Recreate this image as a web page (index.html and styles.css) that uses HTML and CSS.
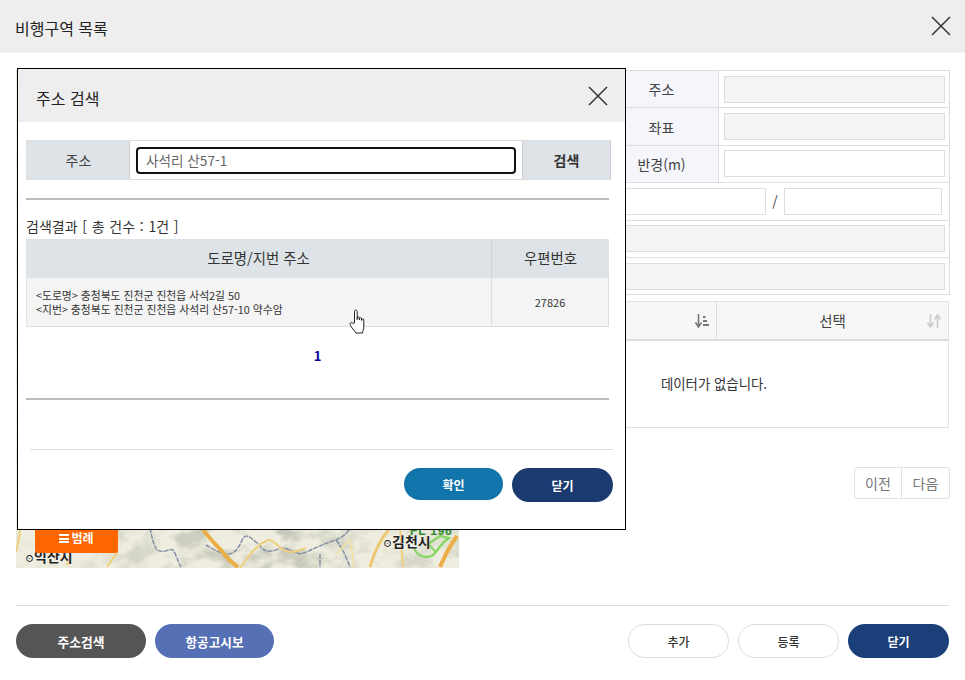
FILE: index.html
```html
<!DOCTYPE html>
<html lang="ko">
<head>
<meta charset="utf-8">
<title>비행구역 목록</title>
<link rel="stylesheet" href="styles.css">
</head>
<body>
<div class="page">
  <header class="head">
    <h1 class="head-title">비행구역 목록</h1>
    <svg class="x-icon" viewBox="0 0 20 20"><path d="M1 1L19 19M19 1L1 19"/></svg>
  </header>

  <main class="main">
    <div class="map">
      <svg class="map-svg" viewBox="0 0 443 498" preserveAspectRatio="none">
        <defs>
          <filter id="terrain" x="0" y="0" width="100%" height="100%">
            <feTurbulence type="fractalNoise" baseFrequency="0.035 0.05" numOctaves="5" seed="11"/>
            <feColorMatrix type="matrix" values="0 0 0 0 0.56  0 0 0 0 0.57  0 0 0 0 0.48  2.6 2.6 0 0 -2.35"/>
          </filter>
          <linearGradient id="hills" x1="0" x2="1" y1="0" y2="0">
            <stop offset="0" stop-color="#333"/>
            <stop offset="0.2" stop-color="#666"/>
            <stop offset="0.32" stop-color="#bbb"/>
            <stop offset="0.62" stop-color="#fff"/>
            <stop offset="0.85" stop-color="#888"/>
            <stop offset="1" stop-color="#999"/>
          </linearGradient>
          <mask id="hill-mask"><rect width="443" height="498" fill="url(#hills)"/></mask>
        </defs>
        <rect width="443" height="498" fill="#eeeddf"/>
        <g mask="url(#hill-mask)"><rect width="443" height="498" filter="url(#terrain)"/></g>
        <path d="M134 458C136 468 138 476 141 480C150 484 152 478 157 480C160 484 162 492 165 497" class="river"/>
        <path d="M190 475C196 478 204 484 212 484C218 484 222 480 227 468C232 462 238 472 243 474C248 484 256 482 264 478C272 478 278 482 284 484C292 482 298 478 304 476C316 470 328 470 334 458" class="river"/>
        <path d="M304 484V497M320 470C326 478 328 482 334 497" class="river"/>
        <path d="M186 458C194 470 204 478 208 484C214 492 218 494 222 497" class="road-o"/>
        <path d="M4 458C4 468 2 472 0 482M91 497C96 490 98 486 102 482M50 495L54 491" class="road-y"/>
        <path d="M224 498C232 488 238 476 252 470C258 468 264 482 274 482C280 482 284 480 290 478" class="road-y"/>
        <path d="M321 484C326 476 330 474 334 470C336 480 337 490 338 497" class="road-lt"/>
        <path d="M354 497C358 484 362 472 374 458" class="road-w"/>
        <path d="M387 497C386 484 385 470 384 458" class="road-y"/>
        <path d="M424 497C428 488 432 478 441 466" class="road-o"/>
        <path d="M398 478C402 488 414 490 420 482C424 476 430 470 433 468L424 466L412 474L420 482" class="zone"/>
        <text x="367" y="477" class="map-label"><tspan class="map-dot">⊙</tspan>김천시</text>
        <text x="9" y="492" class="map-label"><tspan class="map-dot">⊙</tspan>익산시</text>
        <text x="394" y="465" class="map-fl">FL 196</text>
      </svg>
      <div class="legend"><span class="legend-bars"></span>범례</div>
    </div>

    <div class="side">
      <div class="form">
        <div class="form-row">
          <div class="form-label">주소</div>
          <div class="form-cell"><span class="field field-off"></span></div>
        </div>
        <div class="form-row">
          <div class="form-label">좌표</div>
          <div class="form-cell"><span class="field field-off"></span></div>
        </div>
        <div class="form-row">
          <div class="form-label">반경(m)</div>
          <div class="form-cell"><span class="field"></span></div>
        </div>
        <div class="form-row">
          <div class="form-cell form-split">
            <span class="field"></span><i class="slash">/</i><span class="field field-end"></span>
          </div>
        </div>
        <div class="form-row">
          <div class="form-cell"><span class="field field-off"></span></div>
        </div>
        <div class="form-row">
          <div class="form-cell"><span class="field field-off"></span></div>
        </div>
      </div>

      <div class="grid">
        <div class="grid-head">
          <div class="grid-th grid-th-first">
            <svg class="sort" viewBox="0 0 14 14"><path d="M3.5 0V11M0.5 8.5L3.5 13L6.5 8.5" class="sort-dark"/><path d="M8 3H10.5M8 7H12M8 11H14" class="sort-bars"/></svg>
          </div>
          <div class="grid-th grid-th-last">
            <span>선택</span>
            <svg class="sort sort-pale" viewBox="0 0 14 14"><path d="M3.5 0V11M0.5 8.5L3.5 13L6.5 8.5M10.5 14V3M7.5 5.5L10.5 1L13.5 5.5"/></svg>
          </div>
        </div>
        <div class="grid-empty">데이터가 없습니다.</div>
      </div>

      <div class="pager">
        <span class="pager-btn">이전</span><span class="pager-btn">다음</span>
      </div>
    </div>
  </main>

  <footer class="foot">
    <div class="foot-group">
      <button class="btn btn-grey">주소검색</button>
      <button class="btn btn-blue">항공고시보</button>
    </div>
    <div class="foot-group">
      <button class="btn btn-line">추가</button>
      <button class="btn btn-line">등록</button>
      <button class="btn btn-navy">닫기</button>
    </div>
  </footer>

  <section class="dialog">
    <header class="dialog-head">
      <h2 class="dialog-title">주소 검색</h2>
      <svg class="x-icon" viewBox="0 0 20 20"><path d="M1 1L19 19M19 1L1 19"/></svg>
    </header>
    <div class="dialog-body">
      <div class="search">
        <div class="search-label">주소</div>
        <div class="search-cell"><div class="search-input">사석리 산57-1</div></div>
        <div class="search-btn">검색</div>
      </div>
      <hr class="thick">
      <div class="count">검색결과 [ 총 건수 : 1건 ]</div>
      <div class="result">
        <div class="result-th">도로명/지번 주소</div>
        <div class="result-th">우편번호</div>
        <div class="result-td result-addr">&lt;도로명&gt; 충청북도 진천군 진천읍 사석2길 50<br>&lt;지번&gt; 충청북도 진천군 진천읍 사석리 산57-10 약수암</div>
        <div class="result-td result-zip">27826</div>
      </div>
      <div class="paging">1</div>
      <hr class="thick">
      <div class="dialog-foot">
        <button class="btn btn-teal">확인</button>
        <button class="btn btn-navy2">닫기</button>
      </div>
    </div>
  </section>

  <svg class="cursor" viewBox="0 0 17 25">
    <path d="M5.5 14V3C5.5 0.4 8.2 0.4 8.2 3V10.5V9C8.2 7.3 10.4 7.3 10.4 9V11V9.8C10.4 8.3 12.6 8.3 12.6 9.8V11.5V10.8C12.6 9.5 14.8 9.5 14.8 11V18C14.8 21 13.5 22 13.5 24H6.8C6 22 3.8 20.5 1.5 16.5C0.2 14.2 2.3 12.6 3.6 14.2Z"/>
  </svg>
</div>
</body>
</html>
```

FILE: styles.css
```css
* { box-sizing: border-box; }
html, body { margin: 0; padding: 0; background: #fff; }
body {
  font-family: "Noto Sans CJK KR", "Noto Sans", sans-serif;
  font-size: 14px;
  color: #333;
}
.page {
  position: relative;
  width: 965px;
  height: 680px;
  overflow: hidden;
}
.head {
  height: 53px;
  background: #eee;
  border-bottom: 1px solid #f5f5f5;
  display: flex;
  align-items: center;
  justify-content: space-between;
  padding: 0 14px 0 15px;
}
.head-title {
  margin: 0;
  font-size: 16px;
  font-weight: 400;
  line-height: 24px;
  color: #222;
  position: relative;
  top: 2px;
}
.x-icon {
  width: 20px;
  height: 20px;
  fill: none;
  stroke: #333;
  stroke-width: 1.5;
}

.main {
  display: flex;
  gap: 20px;
  padding: 17px 15px 0 16px;
}
.map {
  position: relative;
  width: 443px;
  height: 498px;
  flex: none;
}
.map-svg { display: block; width: 100%; height: 100%; }
.river { fill: none; stroke: #7f8ea3; stroke-width: 1.4; stroke-dasharray: 5 1; }
.road-y { fill: none; stroke: #efcf7c; stroke-width: 2; }
.road-o { fill: none; stroke: #eaae44; stroke-width: 4; }
.road-w { fill: none; stroke: #eec773; stroke-width: 3; }
.road-lt { fill: none; stroke: #f2e29f; stroke-width: 1.5; }
.zone { fill: none; stroke: #84d862; stroke-width: 2.2; }
.map-label {
  font-size: 14px;
  font-weight: 700;
  fill: #222;
  stroke: #fff;
  stroke-width: 0.5;
  paint-order: stroke;
}
.map-dot { font-size: 9px; }
.map-fl {
  font-size: 12px;
  font-weight: 700;
  letter-spacing: 0.8px;
  fill: #2e8b2e;
  font-family: "Liberation Sans", sans-serif;
}
.legend {
  position: absolute;
  left: 19px;
  bottom: 15px;
  width: 83px;
  height: 34px;
  background: #ff6600;
  border-radius: 0 0 3px 3px;
  color: #fff;
  font-size: 12px;
  font-weight: 700;
  display: flex;
  align-items: flex-end;
  justify-content: center;
  gap: 2px;
  padding-bottom: 9px;
  line-height: 12px;
}
.legend-bars {
  width: 10px;
  height: 9px;
  margin-bottom: 1px;
  border-top: 2px solid #fff;
  border-bottom: 2px solid #fff;
  background: linear-gradient(#fff, #fff) center / 100% 2px no-repeat;
}

.side { width: 471px; flex: none; }
.form {
  margin-left: 125px;
  width: 346px;
  border: 1px solid #ddd;
  border-width: 1px 1px 0 1px;
}
.form-row {
  display: flex;
  height: 37.4px;
  border-bottom: 1px solid #ddd;
}
.form-label {
  width: 114px;
  flex: none;
  background: #f4f6fb;
  border-right: 1px solid #ddd;
  display: flex;
  align-items: center;
  justify-content: center;
  color: #444;
  font-size: 14px;
}
.form-cell {
  flex: 1;
  display: flex;
  align-items: center;
  padding: 0 4px 0 5px;
}
.form-split { padding-right: 7px; }
.field {
  display: block;
  flex: 1;
  height: 27px;
  border: 1px solid #ddd;
  background: #fff;
}
.field-off { background: #f4f4f4; }
.field-end { flex: none; width: 158px; }
.slash {
  width: 18px;
  text-align: center;
  font-style: normal;
  color: #444;
  font-size: 14px;
}

.grid {
  margin-top: 6px;
  width: 470px;
  border: 1px solid #e2e2e2;
  height: 127px;
}
.grid-head {
  display: flex;
  height: 39px;
  background: #f7f7f7;
  border-bottom: 2px solid #ddd;
  color: #444;
  font-size: 14.5px;
}
.grid-th {
  position: relative;
  display: flex;
  align-items: center;
  justify-content: center;
}
.grid-th-first { width: 237px; border-right: 1px solid #ddd; }
.grid-th-last { flex: 1; }
.sort {
  position: absolute;
  width: 14px;
  height: 14px;
  right: 7px;
  top: 12px;
  fill: none;
  stroke: #777;
  stroke-width: 1.6;
}
.sort-bars { stroke-width: 2; }
.sort-pale { stroke: #ccc; }
.grid-empty {
  height: 86px;
  padding-bottom: 2px;
  display: flex;
  align-items: center;
  justify-content: center;
  color: #333;
  font-size: 13.4px;
}

.pager {
  display: flex;
  justify-content: flex-end;
  margin-top: 39px;
}
.pager-btn {
  width: 48px;
  height: 32px;
  border: 1px solid #e2e2e2;
  display: flex;
  align-items: center;
  justify-content: center;
  color: #777;
  font-size: 14px;
}
.pager-btn:first-child { border-radius: 3px 0 0 3px; }
.pager-btn:last-child { border-radius: 0 3px 3px 0; border-left: 0; }

.foot {
  position: absolute;
  left: 16px;
  top: 605px;
  width: 933px;
  padding-top: 18px;
  border-top: 1px solid #ddd;
  display: flex;
  justify-content: space-between;
}
.foot-group { display: flex; gap: 9px; }
.btn {
  height: 34px;
  width: 101px;
  border: 0;
  border-radius: 17px;
  padding: 0;
  font-family: inherit;
  font-size: 12px;
  font-weight: 700;
  color: #fff;
  cursor: pointer;
}
.btn-grey { background: #555; width: 130px; font-size: 12.8px; }
.btn-blue { background: #5570b5; width: 119px; font-size: 12.6px; }
.btn-line { background: #fff; border: 1px solid #ddd; color: #333; font-weight: 500; }
.btn-navy { background: #1b4079; }
.btn-teal { background: #1175ab; width: 99px; height: 32px; }
.btn-navy2 { background: #1b3a6f; }

.dialog {
  position: absolute;
  left: 17px;
  top: 68px;
  width: 609px;
  height: 462px;
  background: #fff;
  border: 1px solid #000;
}
.dialog-head {
  height: 53px;
  background: #eee;
  display: flex;
  align-items: center;
  justify-content: space-between;
  padding: 0 17px 0 18px;
}
.dialog-title {
  margin: 0;
  font-size: 16px;
  font-weight: 400;
  line-height: 24px;
  color: #222;
  position: relative;
  top: 2px;
}
.dialog-body { padding: 18px 12px 0 8px; }
.search {
  display: flex;
  width: 585px;
  height: 40px;
  border: 1px solid #ddd;
  border-width: 1px 0;
}
.search-label {
  width: 104px;
  padding-left: 2px;
  background: #dde3e7;
  border-right: 1px solid #ccc;
  display: flex;
  align-items: center;
  justify-content: center;
  color: #444;
}
.search-cell { flex: 1; padding: 6px; }
.search-input {
  height: 27px;
  border: 2px solid #111;
  border-radius: 4px;
  padding-left: 8px;
  color: #666;
  font-size: 13.6px;
  line-height: 23px;
}
.search-btn {
  width: 89px;
  background: #dde3e7;
  display: flex;
  align-items: center;
  justify-content: center;
  font-weight: 700;
  color: #333;
  border: 1px solid #ccd;
  border-width: 0 1px 0 1px;
}
.thick {
  margin: 18px 0 0;
  width: 583px;
  height: 2px;
  border: 0;
  background: #bbb;
}
.count {
  margin-top: 16px;
  height: 20px;
  line-height: 21px;
  font-size: 14px;
  word-spacing: 0.8px;
  color: #333;
}
.result {
  margin-top: 3px;
  display: grid;
  width: 583px;
  grid-template-columns: 465px 1fr;
  grid-template-rows: 39px 48px;
  border-bottom: 1px solid #ddd;
}
.result-th {
  background: #dde3e7;
  display: flex;
  align-items: center;
  justify-content: center;
  padding-bottom: 2px;
  font-size: 14.4px;
  color: #333;
}
.result-th + .result-th { border-left: 1px solid #cfd6da; }
.result-td {
  background: #f4f4f4;
  color: #333;
  display: flex;
  align-items: center;
}
.result-addr {
  display: block;
  padding: 10px 0 0 9px;
  font-size: 10.8px;
  line-height: 14px;
  border-left: 1px solid #e4e4e4;
}
.result-zip {
  justify-content: center;
  font-size: 11px;
  border-left: 1px solid #ddd;
  border-right: 1px solid #ddd;
}
.paging {
  height: 71px;
  padding-top: 19px;
  text-align: center;
  font-size: 13px;
  font-weight: 700;
  line-height: 19px;
  color: #000099;
  width: 583px;
}
.paging + .thick { margin-top: 0; }
.dialog-foot {
  margin: 49px 0 0 4px;
  padding-top: 18px;
  border-top: 1px solid #ddd;
  display: flex;
  justify-content: flex-end;
  gap: 9px;
  width: 583px;
}
.cursor {
  position: absolute;
  left: 349px;
  top: 309px;
  width: 17px;
  height: 25px;
  fill: #fff;
  stroke: #222;
  stroke-width: 1;
}
```
